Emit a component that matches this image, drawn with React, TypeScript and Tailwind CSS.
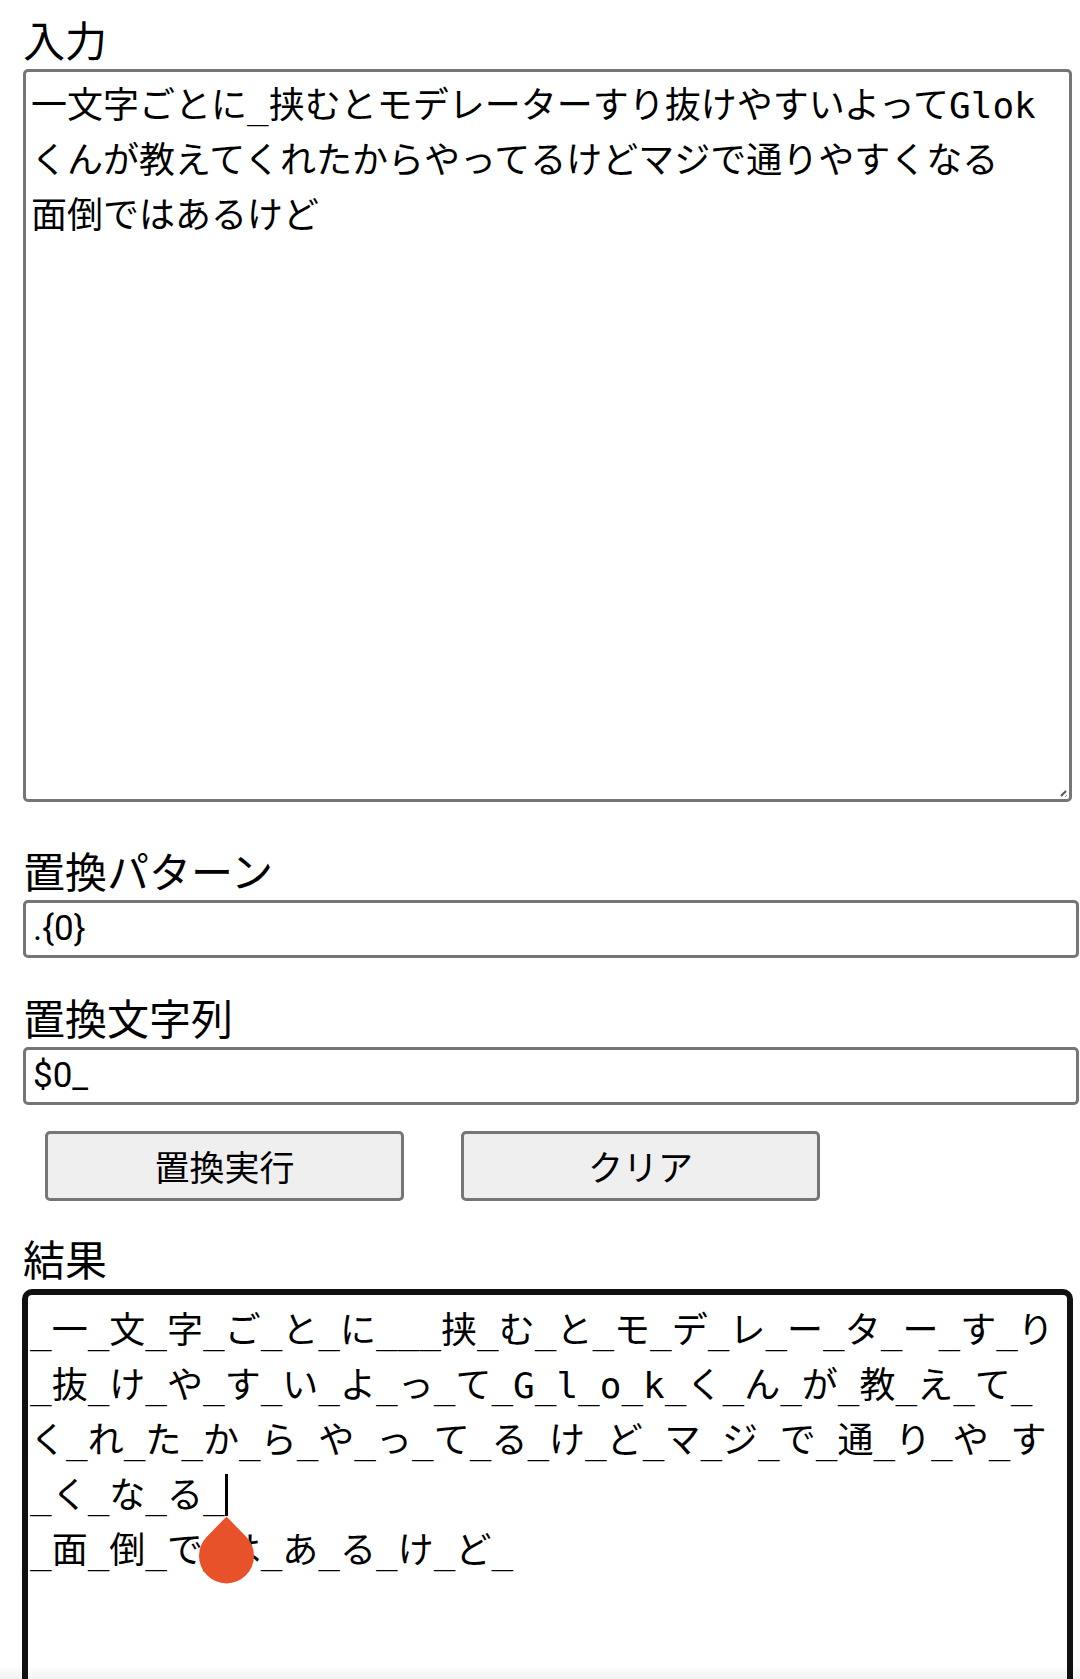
import React from "react";

const inputLines = [
  "一文字ごとに_挟むとモデレーターすり抜けやすいよってGlok",
  "くんが教えてくれたからやってるけどマジで通りやすくなる",
  "面倒ではあるけど",
];

const resultLines = [
  "_一_文_字_ご_と_に___挟_む_と_モ_デ_レ_ー_タ_ー_す_り",
  "_抜_け_や_す_い_よ_っ_て_G_l_o_k_く_ん_が_教_え_て_",
  "く_れ_た_か_ら_や_っ_て_る_け_ど_マ_ジ_で_通_り_や_す",
];

function Handle() {
  return (
    <svg
      className="absolute left-[-27px] top-[48px]"
      width="57"
      height="68"
      viewBox="0 0 57 68"
    >
      <path
        d="M28.5 0.5 L47.95 20.45 A27.5 27.5 0 1 1 9.05 20.45 Z"
        fill="#e8522b"
      />
    </svg>
  );
}

export default function App() {
  return (
    <div className="relative h-[1679px] overflow-hidden bg-white pl-[23px] pt-[8px] text-black font-['Noto_Sans_CJK_JP','Noto_Sans',sans-serif]">
      <div className="text-[42px] leading-[61px]">入力</div>
      <div className="relative h-[733px] w-[1049px] rounded-[5px] border-[3px] border-[#767676] px-[5px] pt-[6px] font-['DejaVu_Sans_Mono','Noto_Sans_CJK_JP',monospace] text-[36px] leading-[55px]">
        {inputLines.map((l, i) => (
          <div key={i} className="whitespace-pre">
            {l}
          </div>
        ))}
        <svg
          className="absolute bottom-[1px] right-[1px]"
          width="10"
          height="10"
          viewBox="0 0 10 10"
        >
          <line x1="3" y1="8" x2="8" y2="3" stroke="#555" strokeWidth="2" />
          <line x1="7" y1="9" x2="9" y2="7" stroke="#999" strokeWidth="1" />
        </svg>
      </div>

      <div className="mt-[37px] text-[42px] leading-[61px]">置換パターン</div>
      <div className="flex h-[58px] w-[1056px] items-center rounded-[5px] border-[3px] border-[#767676] px-[7px] font-['Roboto',sans-serif] text-[35px]">
        {".{0}"}
      </div>

      <div className="mt-[28px] text-[42px] leading-[61px]">置換文字列</div>
      <div className="flex h-[58px] w-[1056px] items-center rounded-[5px] border-[3px] border-[#767676] px-[7px] font-['Roboto',sans-serif] text-[35px]">
        $0_
      </div>

      <div className="ml-[22px] mt-[26px] flex gap-[57px]">
        <div className="flex h-[70px] w-[359px] items-center justify-center rounded-[5px] border-[3px] border-[#767676] bg-[#efefef] text-[35px]">
          置換実行
        </div>
        <div className="flex h-[70px] w-[359px] items-center justify-center rounded-[5px] border-[3px] border-[#767676] bg-[#efefef] text-[35px]">
          クリア
        </div>
      </div>

      <div className="mt-[25px] text-[42px] leading-[63px]">結果</div>
      <div className="relative -ml-[1px] h-[760px] w-[1051px] rounded-[10px] border-[6px] border-[#111111] px-[2px] pt-[8px] font-['DejaVu_Sans_Mono','Noto_Sans_CJK_JP',monospace] text-[36px] leading-[55px]">
        {resultLines.map((l, i) => (
          <div key={i} className="whitespace-pre">
            {l}
          </div>
        ))}
        <div className="whitespace-pre">
          _く_な_る_
          <span className="relative inline-block h-[55px] w-0 align-top">
            <span className="absolute left-0 top-[6px] h-[42px] w-[3px] bg-black" />
            <Handle />
          </span>
        </div>
        <div className="whitespace-pre">_面_倒_で_は_あ_る_け_ど_</div>
      </div>

      <div className="absolute bottom-0 left-0 h-[14px] w-full bg-gradient-to-b from-black/0 to-black/5" />
    </div>
  );
}
